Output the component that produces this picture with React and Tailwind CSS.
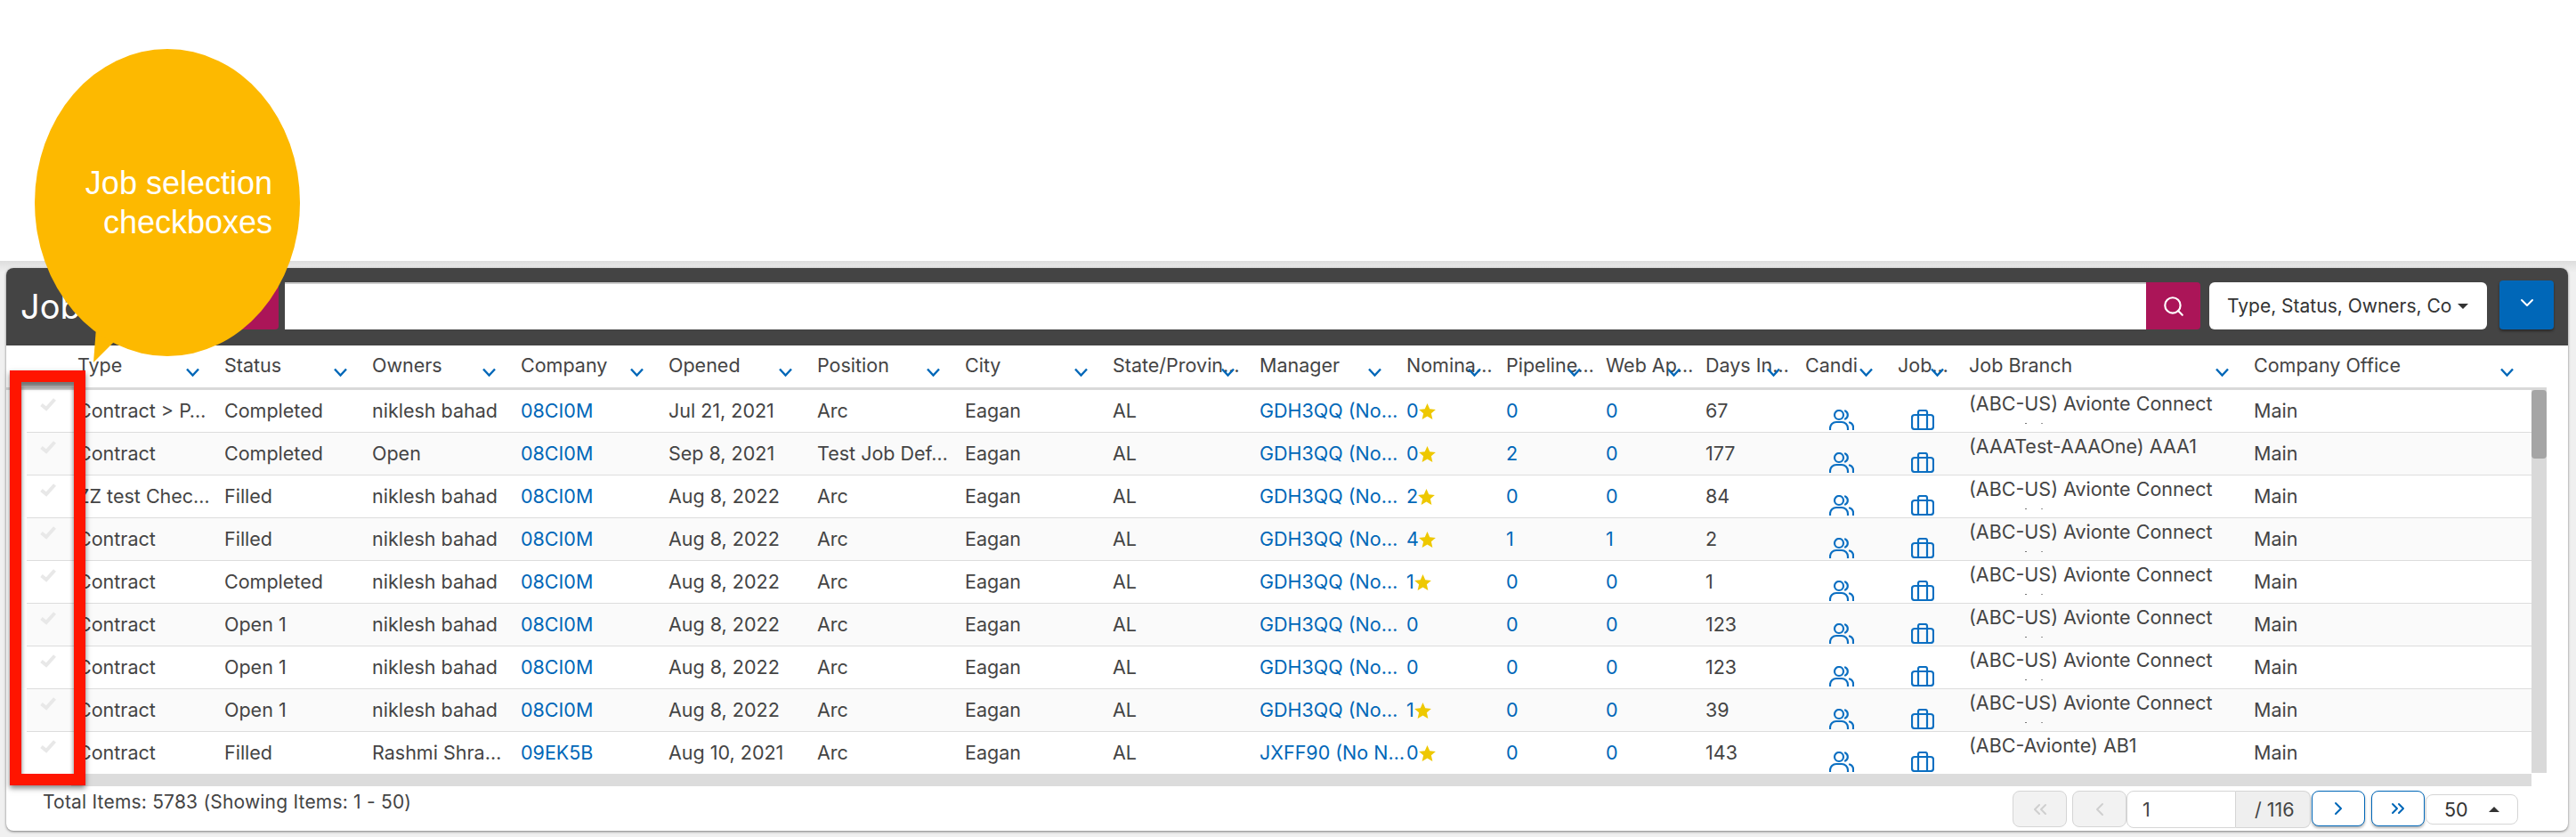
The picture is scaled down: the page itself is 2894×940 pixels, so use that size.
import React from "react";
import { Search, ChevronDown, ChevronsLeft, ChevronLeft, ChevronRight, ChevronsRight } from "lucide-react";

const headers = ["Type","Status","Owners","Company","Opened","Position","City","State/Provin…","Manager","Nomina…","Pipeline…","Web Ap…","Days In…","Candi","Job…","Job Branch","Company Office"];

const rows = [
  ["Contract > P…","Completed","niklesh bahad","08CI0M","Jul 21, 2021","Arc","GDH3QQ (No…","0",true,"0","0","67","(ABC-US) Avionte Connect",true],
  ["Contract","Completed","Open","08CI0M","Sep 8, 2021","Test Job Def…","GDH3QQ (No…","0",true,"2","0","177","(AAATest-AAAOne) AAA1",false],
  ["ZZ test Chec…","Filled","niklesh bahad","08CI0M","Aug 8, 2022","Arc","GDH3QQ (No…","2",true,"0","0","84","(ABC-US) Avionte Connect",true],
  ["Contract","Filled","niklesh bahad","08CI0M","Aug 8, 2022","Arc","GDH3QQ (No…","4",true,"1","1","2","(ABC-US) Avionte Connect",true],
  ["Contract","Completed","niklesh bahad","08CI0M","Aug 8, 2022","Arc","GDH3QQ (No…","1",true,"0","0","1","(ABC-US) Avionte Connect",true],
  ["Contract","Open 1","niklesh bahad","08CI0M","Aug 8, 2022","Arc","GDH3QQ (No…","0",false,"0","0","123","(ABC-US) Avionte Connect",true],
  ["Contract","Open 1","niklesh bahad","08CI0M","Aug 8, 2022","Arc","GDH3QQ (No…","0",false,"0","0","123","(ABC-US) Avionte Connect",true],
  ["Contract","Open 1","niklesh bahad","08CI0M","Aug 8, 2022","Arc","GDH3QQ (No…","1",true,"0","0","39","(ABC-US) Avionte Connect",true],
  ["Contract","Filled","Rashmi Shra…","09EK5B","Aug 10, 2021","Arc","JXFF90 (No N…","0",true,"0","0","143","(ABC-Avionte) AB1",false],
];

function Users() {
  return (
    <svg width="28" height="23" viewBox="0 0 28 23" fill="none" stroke="#0b6fc2" strokeWidth="2.2" strokeLinecap="round" className="block">
      <circle cx="11" cy="6" r="5" />
      <path d="M18 1.5a5 5 0 0 1 0 9" />
      <path d="M1 24v-3a7 7 0 0 1 7-7h6a7 7 0 0 1 7 7v3" />
      <path d="M23 14.5a6 6 0 0 1 4 6v3" />
    </svg>
  );
}

function Case() {
  return (
    <svg width="26" height="23" viewBox="0 0 26 23" fill="none" stroke="#0b6fc2" strokeWidth="2.2" className="block">
      <rect x="1" y="6" width="24" height="16" rx="3" />
      <path d="M8 22V3a2 2 0 0 1 2-2h6a2 2 0 0 1 2 2v19" />
    </svg>
  );
}

function Check() {
  return (
    <svg width="18" height="15" viewBox="0 0 18 15" fill="none" stroke="#e8e8e8" strokeWidth="4" className="block">
      <polyline points="1.5,7.5 7,12 16.5,1.5" />
    </svg>
  );
}

function Star() {
  return (
    <svg width="19" height="18" viewBox="0 0 24 23" fill="#eec800" className="block">
      <polygon points="12,0 15.5,8 24,8.8 17.6,14.4 19.5,23 12,18.4 4.5,23 6.4,14.4 0,8.8 8.5,8" />
    </svg>
  );
}

function Cell({ children, blue }) {
  return (
    <div className={"flex items-center overflow-hidden whitespace-nowrap " + (blue ? "text-[#0067b8]" : "text-[#444444]")}>
      {children}
    </div>
  );
}

export default function App() {
  return (
    <div className="relative h-[940px] w-[2894px] overflow-hidden bg-white font-['Inter',sans-serif] text-[21.5px] text-[#444444]">
      <div className="h-[293px]" />
      <div className="h-[647px] bg-gradient-to-b from-[#dddddd] from-0% to-[#f0f0f0] to-[2%] pl-[7px] pt-[8px]">
        <div className="flex h-[632px] w-[2878px] flex-col rounded-lg bg-white shadow-[0_1px_3px_rgba(0,0,0,0.5)]">
          {/* dark toolbar */}
          <div className="flex h-[87px] shrink-0 items-start rounded-t-lg bg-[#444444] pl-[16px] pt-[16px]">
            <div className="flex h-[53px] w-[171px] items-center text-[38px] leading-none text-white">Jobs</div>
            <div className="ml-[2px] h-[53px] w-[117px] rounded-r bg-[#ab1558]" />
            <div className="ml-[7px] h-[53px] w-[2091px] border-t-2 border-[#cccccc] bg-white" />
            <div className="flex h-[53px] w-[61px] items-center justify-center rounded-r bg-[#ab1558] text-white">
              <Search size={26} strokeWidth={2} />
            </div>
            <div className="ml-[10px] flex h-[53px] w-[312px] items-center justify-between rounded-md bg-white pl-[20px] pr-[21px] text-[21px] text-[#333333]">
              <span className="whitespace-nowrap">Type, Status, Owners, Co</span>
              <span className="h-0 w-0 border-x-[6px] border-t-[6px] border-x-transparent border-t-[#333333]" />
            </div>
            <div className="-mt-[2px] ml-[14px] flex h-[55px] w-[61px] items-center justify-center rounded bg-[#0067b8] pb-[6px] text-white shadow-[0_2px_3px_rgba(0,0,0,0.4)]">
              <ChevronDown size={24} strokeWidth={2} />
            </div>
          </div>

          {/* column heads */}
          <div className="mr-[24px] grid h-[50px] shrink-0 grid-cols-[165px_166px_167px_166px_167px_166px_166px_165px_165px_112px_112px_112px_112px_104px_80px_320px_320px] border-b-[3px] border-[#d9d9d9] pl-[80px]">
            {headers.map((h) => (
              <div key={h} className="relative flex items-center whitespace-nowrap pb-[2px]">
                <span>{h}</span>
                <svg width="15" height="10" viewBox="0 0 15 10" fill="none" stroke="#0067b8" strokeWidth="2.4" className="absolute right-[28px] top-[25px]">
                  <polyline points="1,1.5 7.5,8.5 14,1.5" />
                </svg>
              </div>
            ))}
          </div>

          {/* rows with frozen selection column */}
          <div className="flex h-[432px] shrink-0">
            <div className="ml-[23px] w-[50px] shrink-0">
              {rows.map((r, i) => (
                <div key={i} className={"h-[48px] border-b border-[#dddddd] pl-[15px] pt-[9px] " + (i % 2 ? "bg-[#fafafa]" : "bg-white")}>
                  <Check />
                </div>
              ))}
            </div>
            <div className="w-[2764px] shrink-0">
              {rows.map((r, i) => (
                <div key={i} className={"grid h-[48px] grid-cols-[172px_166px_167px_166px_167px_166px_166px_165px_165px_112px_112px_112px_112px_104px_80px_320px_312px] border-b border-[#dddddd] pl-0 " + (i % 2 ? "bg-[#fafafa]" : "bg-white")}>
                  <div className="flex items-center overflow-hidden whitespace-nowrap pl-[7px]">{r[0]}</div>
                  <Cell>{r[1]}</Cell>
                  <Cell>{r[2]}</Cell>
                  <Cell blue>{r[3]}</Cell>
                  <Cell>{r[4]}</Cell>
                  <Cell>{r[5]}</Cell>
                  <Cell>Eagan</Cell>
                  <Cell>AL</Cell>
                  <Cell blue>{r[6]}</Cell>
                  <Cell blue>
                    {r[7]}
                    {r[8] && <Star />}
                  </Cell>
                  <Cell blue>{r[9]}</Cell>
                  <Cell blue>{r[10]}</Cell>
                  <Cell>{r[11]}</Cell>
                  <div className="overflow-hidden pl-[27px] pt-[22px]">
                    <Users />
                  </div>
                  <div className="overflow-hidden pl-[15px] pt-[22px]">
                    <Case />
                  </div>
                  <div className="overflow-hidden">
                    <div className="h-[30px] whitespace-nowrap leading-[30px]">{r[12]}</div>
                    {r[13] && (
                      <div className="ml-[63px] mt-[7px] flex gap-[16px]">
                        <span className="h-[1px] w-[2px] bg-[#777777]" />
                        <span className="h-[1px] w-[2px] bg-[#999999]" />
                      </div>
                    )}
                  </div>
                  <Cell>Main</Cell>
                </div>
              ))}
            </div>
            <div className="h-[430px] w-[17px] shrink-0 bg-[#d9d9d9]">
              <div className="h-[77px] rounded-sm bg-[#a5a5a5]" />
            </div>
          </div>

          {/* horizontal scrollbar */}
          <div className="ml-[73px] mr-[41px] h-[13px] shrink-0 bg-[#dcdcdc]" />

          {/* footer */}
          <div className="flex flex-1 items-start justify-between pl-[41px] pr-[56px]">
            <div className="pt-[3px] text-[21px] leading-[30px] tracking-[0.2px]">Total Items: 5783 (Showing Items: 1 - 50)</div>
            <div className="flex items-start pt-[5px]">
              <div className="flex h-[41px] w-[61px] items-center justify-center rounded-lg border border-[#d5d5d5] bg-[#f2f2f2] text-[#cfcfcf]">
                <ChevronsLeft size={24} />
              </div>
              <div className="ml-[6px] flex h-[41px] w-[61px] items-center justify-center rounded-lg border border-[#d5d5d5] bg-[#f2f2f2] text-[#cfcfcf]">
                <ChevronLeft size={24} />
              </div>
              <div className="flex h-[42px] w-[123px] items-center rounded-l-lg border border-[#d5d5d5] bg-white pl-[17px] text-[#444444]">1</div>
              <div className="flex h-[42px] w-[84px] items-center rounded-r-lg border border-l-0 border-[#d5d5d5] bg-[#efefef] pl-[21px]">/ 116</div>
              <div className="ml-[1px] flex h-[40px] w-[60px] items-center justify-center rounded-lg border border-[#0067b8] bg-white text-[#0067b8] shadow-[0_2px_3px_rgba(0,0,0,0.3)]">
                <ChevronRight size={24} />
              </div>
              <div className="ml-[7px] flex h-[40px] w-[60px] items-center justify-center rounded-lg border border-[#0067b8] bg-white text-[#0067b8] shadow-[0_2px_3px_rgba(0,0,0,0.3)]">
                <ChevronsRight size={24} />
              </div>
              <div className="ml-[1px] mt-[4px] flex h-[34px] w-[104px] items-center justify-between rounded-lg border border-[#d5d5d5] bg-white pl-[20px] pr-[20px] text-[#333333]">
                <span>50</span>
                <span className="h-0 w-0 border-x-[6px] border-b-[6px] border-x-transparent border-b-[#333333]" />
              </div>
            </div>
          </div>
        </div>
      </div>

      {/* callout over the page */}
      <svg width="30" height="40" viewBox="0 0 30 40" className="absolute left-[100px] top-[368px]" fill="#fdb900">
        <polygon points="8,0 5,39 30,14" />
      </svg>
      <div className="absolute left-[39px] top-[55px] flex h-[345px] w-[298px] flex-col items-end rounded-[50%] bg-[#fdb900] pr-[31px] pt-[129px] font-['Liberation_Sans',Arial,sans-serif] text-[36px] leading-[44px] text-white">
        <div>Job selection</div>
        <div>checkboxes</div>
      </div>

      {/* red highlight */}
      <div className="absolute left-[11px] top-[416px] h-[466px] w-[85px] border-[13px] border-[#ff1500] shadow-[0_3px_6px_rgba(0,0,0,0.5)] inset-shadow-[0_6px_5px_rgba(0,0,0,0.55)]" />
    </div>
  );
}
